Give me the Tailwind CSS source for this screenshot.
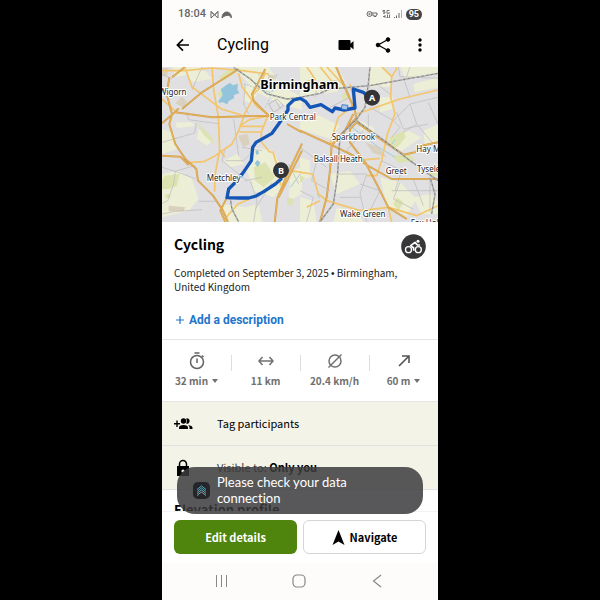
<!DOCTYPE html>
<html lang="en">
<head>
<meta charset="utf-8">
<meta name="viewport" content="width=device-width, initial-scale=1">
<title>Cycling</title>
<script src="https://cdn.jsdelivr.net/npm/@tailwindcss/browser@4"></script>
</head>
<body class="bg-black">
<div class="relative mx-auto flex h-screen w-[46%] flex-col overflow-hidden bg-white font-['Noto_Sans_CJK_SC',sans-serif] text-[#111]">

  <!-- Status bar -->
  <div class="flex h-7 shrink-0 items-center justify-between bg-[#fdfcfa] px-4 font-['Roboto',sans-serif] text-[11px] font-medium text-[#666]">
    <div class="flex items-center gap-0.5">
      <span>18:04</span>
      <svg class="ml-0.5 h-[9px] w-[22px]" viewBox="0 0 22 8" fill="none" stroke="currentColor"><path d="M1 7.500V1l3.500 3.500L8 1v6.500M1 7.500 8 1M1 1l7 6.500" stroke-width="1"/><path d="M12 7.500C12-.5 21.500-.5 21.500 7.500 19 3.500 15.500 4.500 12 7.500Z" fill="currentColor" stroke-width="1"/></svg>
    </div>
    <div class="flex items-center gap-1">
      <svg class="h-2 w-3" viewBox="0 0 12 8" fill="none" stroke="currentColor"><circle cx="3.500" cy="4" r="2.500"/><circle cx="3.500" cy="4" r=".7"/><path d="M5.500 3h5.500v2h-1v1.500H8V5H6"/></svg>
      <svg class="h-2 w-2" viewBox="0 0 8 8" fill="none" stroke="currentColor" stroke-width=".9"><path d="M3 .5H1v1.300h2V3.300H1M7.500.5H5v2.800h2.200V2M3 5v3M1 6.500h2M5.500 4.500V8M4.500 7l1 1 1-1M7.500 8V4.500"/></svg>
      <svg class="h-2 w-2" viewBox="0 0 8 8" fill="currentColor"><path d="M0 7h1v1H0zM2 5.500h1V8H2zM4.500 3h1v5h-1z"/><path opacity=".5" d="M7 0h1v8H7z"/></svg>
      <span class="rounded-full bg-[#444] px-[3px] text-[9px] leading-[11px] font-bold text-white">95</span>
    </div>
  </div>

  <!-- App bar -->
  <header class="flex h-[39px] shrink-0 items-center bg-[#fdfcfa] px-3 pb-[5px] text-black">
    <button aria-label="Back" class="w-[43px]"><svg class="h-[18px] w-[18px]" viewBox="0 0 24 24" fill="none" stroke="currentColor" stroke-width="2.200"><path d="M20 12H5M12 4.500 4.500 12l7.500 7.500"/></svg></button>
    <h1 class="flex-1 font-['Roboto',sans-serif] text-base font-normal">Cycling</h1>
    <div class="-mr-[3px] flex items-center gap-[19px]">
      <button aria-label="Video"><svg class="h-[18px] w-[18px]" viewBox="0 0 18 18" fill="currentColor"><path d="M2.500 4h10q1 0 1 1v2.700L16.500 5v8.500l-3-2.700V13q0 1-1 1h-10q-1 0-1-1V5q0-1 1-1Z"/></svg></button>
      <button aria-label="Share"><svg class="h-[18px] w-[18px]" viewBox="0 0 18 18" fill="currentColor" stroke="currentColor"><path d="M14 3.500 4 9l10 5.500" fill="none" stroke-width="1.200"/><circle cx="14" cy="3.500" r="1.800"/><circle cx="4" cy="9" r="1.800"/><circle cx="14" cy="14.500" r="1.800"/></svg></button>
      <button aria-label="More"><svg class="h-[18px] w-[18px]" viewBox="0 0 18 18" fill="currentColor"><circle cx="9" cy="4" r="1.700"/><circle cx="9" cy="9" r="1.700"/><circle cx="9" cy="14" r="1.700"/></svg></button>
    </div>
  </header>

  <main class="min-h-0 flex-1 overflow-hidden">
    <!-- Route map, drawn at three units per pixel -->
    <svg class="block aspect-[276/155] w-full" viewBox="0 9 828 465" preserveAspectRatio="xMidYMid slice" role="img" aria-label="Route map of Birmingham" font-family="'Noto Sans','Open Sans',sans-serif">
      <rect width="828" height="480" fill="#e0dfe1"/>
      <g fill="#eceed6">
        <path d="M30 8h90l-10 20-70 10ZM210 8h110l40 60 60 30v40l-70-20-60-30-50-50ZM0 195l35 10 10 50-45 15ZM0 330l50-10 40 25 20 60-30 35-80 20ZM180 420l70 10 40-10 10 54H190ZM110 195l40 35-15 15-30-20ZM275 250l60 10 40 90-40 50-60-20-20-60ZM40 175l50 0 10 12-55 5ZM185 290l40-20 20 30-40 10ZM250 60l40 20-20 40-25-10ZM385 320l35-10v80l-40 20ZM70 20l60 0 20 25-60 10Z"/>
      </g>
      <g fill="#eceed6" transform="translate(414 0)">
        <path d="M0 8h110l30 50-30 25-110 15ZM210 8h40l25 30-5 30-60 0ZM300 8h114v20l-100 15ZM340 60l74-20v30l-70 15ZM0 150l60 5 60 30-30 40-90-30ZM240 100l40 0 0 35-40 10ZM285 215l40-15 40 20-60 40-40-15ZM370 200l44-20v55l-40 5ZM0 280l30 10 0 50-30 10ZM90 330l60-10 30 40-70 30ZM240 340l60 15 50 50-30 50-60-30ZM0 400l40 10 10 64H0ZM340 400l50-10 24 20v40h-50ZM110 430l60 10 20 34h-90ZM180 170l40 20 10 25-50-20Z"/>
      </g>
      <g fill="#dde3b0">
        <path d="M105 175l20 38 33 30-10-25ZM8 335l45-5-8 35-25 10-20 0V350ZM275 310l35-15 30 45-35 30-25-20ZM165 88l18-15 10 20-15 12ZM170 40l30-25 25 10-40 25ZM375 400l20 5-5 20-15-5ZM10 390l15 0 0 12-15 0Z"/>
        <path d="M684 220l42-20 5 20-25 30-22-5ZM690 275l55-5 15 20-50 8ZM545 85l20 5-15 20-12-8ZM704 400l20 15-14 25-16-20ZM414 335l15 5-10 15h-5ZM795 315l33-5v20l-20 8Z"/>
      </g>
      <g fill="#d9d1bd"><path d="M228 215l30-5 5 30-20 10ZM40 118l20-20 15 15-8 18ZM0 12l20 0-5 25-15 0ZM610 235l40 15 24 30-40-12ZM20 425l50 5-5 12-45 0ZM318 30l25 5-10 15-15-5Z"/></g>
      <g fill="#92c5db"><path d="M170 110l12-16-6-18 16-12 12-8 8 8 16-5-2 18 6 10-16 6 0 10-16 8-4 10-14-6-12 2ZM278 298l8-10 9 8-8 14ZM280 262l8-5 3 12-8 4Z"/></g>
      <g fill="none" stroke="#a5cdd8" stroke-width="3"><path stroke-dasharray="5 5" d="M245 60l80 25 40-30M310 130l15-30 20-70M290 30l40 70"/><path d="M415 330l-30 40M570 190l80 60 50 30M465 390l8 12M690 240l10-14M815 385l10-6"/></g>
      <!-- Minor roads -->
      <g fill="none" stroke="#b9b8bd" stroke-width="2">
        <path d="M0 235l98-28 5-30M75 145l4 22 90 12M0 310l40 12 60-18M40 320l-5 40-18 50-17 8M40 322l60 22M0 450l40-8 80-5M110 412l50 0M190 290h55l30-30M190 250l-10 40 75 60M250 60l-5 60 15 30M265 350l20 60-10 64M300 340l-50 10M330 355l-50 80M120 8l-30 70M215 165l15 110M0 30l30 15M380 300l30 60M240 250l60 10"/>
        <path transform="translate(414 0)" d="M130 50l20 50-60 30M0 60l110-10M45 100l10-50M30 20l40 70M210 130l70 40 50-50 84-20M290 145l20 50 75-15M280 170l20 20-25 30M330 120l20 60-40 25M385 115l29 65M350 180l50 60M295 8l5 30 114 5M310 40l20 60M190 200l-50 60 60 40M0 250l80 60M50 290l-15 60 55 30M110 330l90 0-20 60 20 84M180 360l60 20-30 60M245 290l60 30-20 60M300 355l-20 50 60 30M340 345l30 80M390 345l0 100M275 380h139M120 400l60 0M0 380l40 20-20 74M330 8l-10 30M230 60l40 30M205 150l0 40"/>
      </g>
      <g stroke="#aaa" fill="none" stroke-width="2"><path d="M320 120l25-15 20 20-30 20ZM340 108l15 25"/></g>
      <!-- Secondary roads -->
      <g fill="none" stroke="#f3c56c" stroke-width="5" stroke-linejoin="round">
        <path d="M70 14l20 55 38 28 50 38 60 18M0 20l70 0 80-8 90 8 80 10M150 8l5 70 14 80 4 100-15 80 0 45M230 28l10 40 45 60 35 25M240 156l80 0M275 100l-25 45-20 55-20 40-50 35-35 18-50 3M310 25l-20 50-20 20M232 187h75M232 204h66M298 204l18-45M232 187l30-20 50-10M298 204l0 30 25 30 10 0 15 50 8 50M173 258l15 20M188 465l40-45 35-15M385 320l35 5M0 105l38 35"/>
        <path transform="translate(414 0)" d="M245 8l30 30 14-22V8M275 38l-3 62 13 50-23 60-17 80-15 45-30 0M414 78l-114 27-130 45M165 290l75-7M0 325l38 5 17 60 25 20 100 30 85-10 85 25 64-30M20 8l25 37-45 15M60 8l40 50M150 60l15 60-50 40-25 80M80 8l50 55M60 410l-40 20M265 430l10 44"/>
      </g>
      <!-- Main roads, casing then fill -->
      <g fill="none" stroke="#cfa054" stroke-width="6" stroke-linejoin="round">
        <path d="M22 40l-8 50 16 60-8 30 18 60 30 45 33 30 5 35 45 45 30 45 15 34M0 275l55 3 25 25M0 178l40-35 10-10M40 145l110 15 170-5M60 135l60-50 110-70M30 40l40-32M320 155l-45-45-5-20 40-75M320 155l15 4M375 180l45 25M338 474l8-70 24-60 50-105M350 400l30-60 40-80M195 400l-20 40 15 34"/>
        <path transform="translate(414 0)" d="M0 200l95 43 65 32 40 28 30 57 35 70 55 35M200 303l75 42 139 0M165 140l5 35 70 50 70 47 35-7 20-20 49-10M108 8l22 52 35 80M170 160l-50 55-25 28-5 77-10 80-20 74M170 175l-20 20 0 40 50 66M160 150l-30 60-35 33"/>
      </g>
      <g fill="none" stroke="#eab356" stroke-width="3" stroke-linejoin="round">
        <path d="M22 40l-8 50 16 60-8 30 18 60 30 45 33 30 5 35 45 45 30 45 15 34M0 275l55 3 25 25M0 178l40-35 10-10M40 145l110 15 170-5M60 135l60-50 110-70M30 40l40-32M320 155l-45-45-5-20 40-75M320 155l15 4M375 180l45 25M338 474l8-70 24-60 50-105M350 400l30-60 40-80M195 400l-20 40 15 34"/>
        <path transform="translate(414 0)" d="M0 200l95 43 65 32 40 28 30 57 35 70 55 35M200 303l75 42 139 0M165 140l5 35 70 50 70 47 35-7 20-20 49-10M108 8l22 52 35 80M170 160l-50 55-25 28-5 77-10 80-20 74M170 175l-20 20 0 40 50 66M160 150l-30 60-35 33"/>
      </g>
      <!-- Railways -->
      <g fill="none" stroke="#858585" stroke-width="4"><path d="M215 10l50 35 50 45 60 15 40-5M205 405l5 30 20 39"/><path transform="translate(414 0)" d="M0 100l60-12 30-13 120-10 204-37M210 8l-5 52-10 70-25 35-50 50-8 125-12 80-40 54M170 170l90 65 70 55 84 60M390 340l15 50-10 60"/></g>
      <g fill="none" stroke="#dedede" stroke-width="2" stroke-dasharray="7 7"><path d="M215 10l50 35 50 45 60 15 40-5M205 405l5 30 20 39"/><path transform="translate(414 0)" d="M0 100l60-12 30-13 120-10 204-37M210 8l-5 52-10 70-25 35-50 50-8 125-12 80-40 54M170 170l90 65 70 55 84 60M390 340l15 50-10 60"/></g>
      <!-- Ridden route -->
      <path fill="none" stroke="#1456b6" stroke-width="10" stroke-linejoin="round" stroke-linecap="round" d="M357 345L340 360 305 383 282 396 260 402 230 402 195 401 200 375 220 355 242 328 268 290 272 250 282 235 330 208 350 180 378 138 378 125 395 108 415 103 430 112 444 130 477 122 511 143 519 132 546 138 579 132 574 75 604 85 620 100"/>
      <path d="M540 122l18 2-3 14-17-3Z" fill="#a9c4e8" stroke="#1456b6" stroke-width="2"/>
      <!-- Place names -->
      <g font-size="24" fill="#222" stroke="#fff" stroke-width="6" stroke-linejoin="round" paint-order="stroke">
        <text x="-9" y="92">Wigorn</text>
        <text x="323" y="167">Park Central</text>
        <text x="509" y="229">Sparkbrook</text>
        <text x="455" y="295">Balsall Heath</text>
        <text x="671" y="331">Greet</text>
        <text x="763" y="265">Hay Mills</text>
        <text x="765" y="323">Tyseley</text>
        <text x="534" y="458">Wake Green</text>
        <text x="746" y="485">Fox Hollies</text>
        <text x="134" y="351">Metchley</text>
        <text x="295" y="75" font-size="38" font-weight="700" fill="#000">Birmingham</text>
      </g>
      <g fill="#343436"><circle cx="357" cy="319" r="24"/><circle cx="630" cy="101" r="24"/></g>
      <g fill="#fff" font-size="27" font-weight="700" text-anchor="middle"><text x="357" y="329">B</text><text x="630" y="111">A</text></g>
    </svg>

    <section class="border-b border-[#e5e5e5] px-3 pt-3 pb-3">
      <div class="flex h-6 items-center justify-between">
        <h2 class="pb-1 text-sm leading-5 font-bold text-black">Cycling</h2>
        <svg class="h-[25px] w-[25px]" viewBox="0 0 75 75" role="img" aria-label="Cycling"><circle cx="37.500" cy="37.500" r="37" fill="#373739"/><g fill="none" stroke="#fff" stroke-width="4"><circle cx="22.500" cy="47" r="9"/><circle cx="52" cy="47" r="9"/><path d="M38 50V42l-9-7 13-10 7 8 8 0" stroke-width="5" stroke-linejoin="round"/></g><circle cx="51" cy="22" r="4.500" fill="#fff"/></svg>
      </div>
      <p class="pt-2 text-[10px] leading-[13px] text-[#222]">Completed on September 3, 2025 <span class="font-['Liberation_Sans',sans-serif]">•</span> Birmingham, United Kingdom</p>
      <button class="mt-5 flex items-center gap-1 font-['Roboto',sans-serif] text-xs leading-[14px] font-bold text-[#2175cc]"><svg class="ml-px h-[10px] w-[10px]" viewBox="0 0 10 10" stroke="currentColor" stroke-width="1.200"><path d="M1 5h8M5 1v8"/></svg>Add a description</button>
    </section>

    <section class="grid grid-cols-4 border-b border-[#e5e5e5] pt-[11px] pb-[14px] text-[10px] leading-[13px] font-bold text-[#707070]">
      <div class="relative flex flex-col items-center gap-1">
        <svg class="h-[19px] w-[18px]" viewBox="0 0 18 19" fill="none" stroke="#626262" stroke-width="1.500"><circle cx="9" cy="11" r="6.500"/><path d="M9 7.500V12M6.500 2h5M14 4.500l1.500 1.500"/></svg>
        <span class="flex items-center gap-1">32 min <svg class="h-1 w-[6px]" viewBox="0 0 6 4" fill="currentColor"><path d="M0 0h6L3 4Z"/></svg></span>
      </div>
      <div class="relative flex flex-col items-center gap-1 before:absolute before:top-1 before:left-0 before:h-4 before:w-px before:bg-[#ddd]">
        <svg class="h-[19px] w-[18px]" viewBox="0 0 18 19" fill="none" stroke="#707070" stroke-width="1.500"><path d="M2.500 10h13M5.500 6 2 10l3.500 4M12.500 6 16 10l-3.500 4"/></svg>
        <span>11 km</span>
      </div>
      <div class="relative flex flex-col items-center gap-1 before:absolute before:top-1 before:left-0 before:h-4 before:w-px before:bg-[#ddd]">
        <svg class="h-[19px] w-[18px]" viewBox="0 0 18 19" fill="none" stroke="#707070" stroke-width="1.500"><circle cx="9" cy="10" r="6"/><path d="m2.500 16.500 13-13"/></svg>
        <span>20.4 km/h</span>
      </div>
      <div class="relative flex flex-col items-center gap-1 before:absolute before:top-1 before:left-0 before:h-4 before:w-px before:bg-[#ddd]">
        <svg class="h-[19px] w-[18px]" viewBox="0 0 18 19" fill="none" stroke="#555" stroke-width="1.600"><path d="m4 15 10-10M7 5h7v7"/></svg>
        <span class="flex items-center gap-1">60 m <svg class="h-1 w-[6px]" viewBox="0 0 6 4" fill="currentColor"><path d="M0 0h6L3 4Z"/></svg></span>
      </div>
    </section>

    <div class="flex h-11 items-center border-b border-[#e2e2e2] bg-[#f3f3e8] px-3 text-[11px] text-black">
      <span class="w-[43px]"><svg class="h-[14px] w-[19px]" viewBox="0 0 19 14" fill="currentColor"><path d="M2.300 3.500h1.400V6H6v1.400H3.700v2.500H2.300V7.400H0V6h2.300Z"/><circle cx="9.500" cy="4" r="2.700"/><path d="M12.200 1.400a2.700 2.700 0 1 1 0 5.200q1.400-2.600 0-5.200ZM5 12V10.500q0-2.500 4.500-2.500T14 10.500V12ZM14 8.300q4.500.4 4.500 2.400V12h-3v-1.500q0-1.300-1.500-2.200Z"/></svg></span>
      <span>Tag participants</span>
    </div>
    <div class="flex h-11 items-center border-b border-[#e2e2e2] bg-[#f3f3e8] px-3 text-[11px] text-black">
      <span class="w-[43px]"><svg class="h-[18px] w-[18px]" viewBox="0 0 18 18" fill="currentColor"><path fill-rule="evenodd" d="M3 7h12v10H3Zm6 3.400a1.600 1.600 0 1 0 0 3.200 1.600 1.600 0 0 0 0-3.200Z"/><path d="M5.500 7V5a3.500 3.500 0 0 1 7 0v2" fill="none" stroke="currentColor" stroke-width="1.500"/></svg></span>
      <span><span class="text-[#444]">Visible to:</span> <b>Only you</b></span>
    </div>
    <h2 class="px-3 pt-[10px] text-[13px] leading-5 font-bold text-black">Elevation profile</h2>
  </main>

  <footer class="shrink-0 border-t border-[#f3f3f3] bg-white">
    <div class="grid grid-cols-2 gap-[6px] px-3 pt-2 pb-[9px] text-[11px] font-bold">
      <button class="h-[34px] rounded-md bg-[#4f850d] text-white">Edit details</button>
      <button class="flex h-[34px] items-center justify-center gap-[5px] rounded-md border border-[#d5d5d5] text-black"><svg class="h-[15px] w-[13px]" viewBox="0 0 13 15" fill="currentColor"><path d="M6.500 0 12.500 15 6.500 11.500.5 15Z"/></svg>Navigate</button>
    </div>
    <nav class="flex h-[37px] items-center justify-center gap-[62px] bg-[#fdfcfa] pr-0.5 pb-0.5 text-[#888]">
      <button aria-label="Recent apps"><svg class="h-4 w-4" viewBox="0 0 16 16" stroke="currentColor"><path d="M3.500 2v12M8.500 2v12M13.500 2v12"/></svg></button>
      <button aria-label="Home"><svg class="h-4 w-4" viewBox="0 0 16 16" fill="none" stroke="currentColor" stroke-width="1.200"><rect x="2" y="2" width="12" height="12" rx="4"/></svg></button>
      <button aria-label="Back"><svg class="h-4 w-4" viewBox="0 0 16 16" fill="none" stroke="currentColor" stroke-width="1.200"><path d="M12 2 4.500 8l7.500 6"/></svg></button>
    </nav>
  </footer>

  <!-- Toast -->
  <div role="status" class="absolute inset-x-[15px] bottom-[86px] z-20 flex items-center gap-[7px] rounded-[18px] bg-[#3b3b3d]/85 pt-[7px] pb-2 pr-10 pl-4 font-['Lato',sans-serif] text-[13px] leading-4 text-white [font-variant-ligatures:none]">
    <svg class="h-[17px] w-[17px] shrink-0" viewBox="0 0 17 17" fill="none"><rect width="17" height="17" rx="5" fill="#242629"/><path d="M4 7.500 8.500 4 13 7.500M4 9.500 8.500 6 13 9.500" stroke="#48a9c5"/><path d="M4 11.500 8.500 8l4.500 3.500M4 13.500l4.500-3.500 4.500 3.500" stroke="#86a0a8"/></svg>
    <span>Please check your data connection</span>
  </div>
</div>
</body>
</html>
